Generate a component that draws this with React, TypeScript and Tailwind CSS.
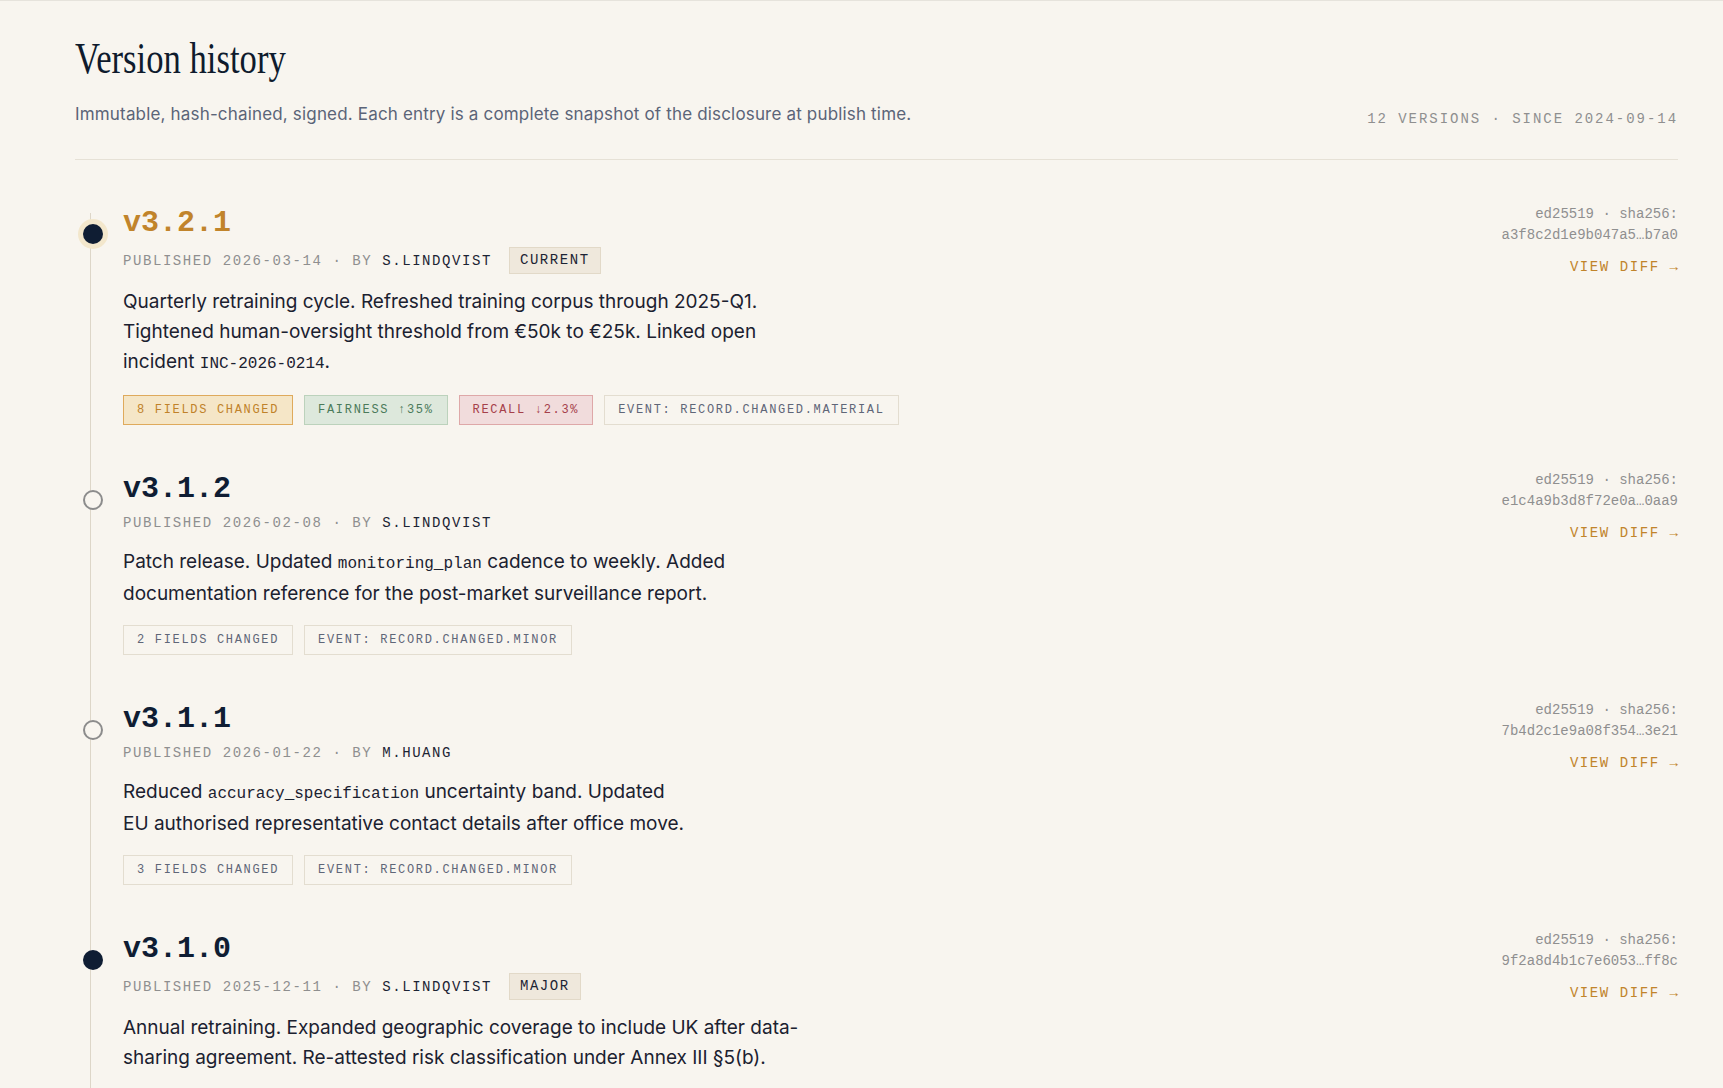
import type { ReactNode } from "react";

const MONO = "font-['Liberation_Mono',monospace]";
const SANS = "font-['Inter',sans-serif]";

type Tone = "gold" | "green" | "red" | "plain";

type Tag = { label: string; tone: Tone };

type Version = {
  version: string;
  date: string;
  by: string;
  badge?: string;
  dot: "current" | "open" | "filled";
  hash: string;
  lines: ReactNode[];
  tags: Tag[];
};

const tagTone: Record<Tone, string> = {
  gold: "border-[#dfaa5c] bg-[#f5e6c7] text-[#c0822a]",
  green: "border-[#bcd2bc] bg-[#dde8dc] text-[#4b7a5a]",
  red: "border-[#dea8a8] bg-[#f1dcdc] text-[#a5404a]",
  plain: "border-[#e3ddd0] bg-transparent text-[#5f6678]",
};

function Code({ children }: { children: ReactNode }) {
  return <code className={`${MONO} text-[16px] text-[#1b2130]`}>{children}</code>;
}

const versions: Version[] = [
  {
    version: "v3.2.1",
    date: "2026-03-14",
    by: "S.LINDQVIST",
    badge: "CURRENT",
    dot: "current",
    hash: "a3f8c2d1e9b047a5…b7a0",
    lines: [
      "Quarterly retraining cycle. Refreshed training corpus through 2025-Q1.",
      "Tightened human-oversight threshold from €50k to €25k. Linked open",
      <>
        incident <Code>INC-2026-0214</Code>.
      </>,
    ],
    tags: [
      { label: "8 FIELDS CHANGED", tone: "gold" },
      { label: "FAIRNESS ↑35%", tone: "green" },
      { label: "RECALL ↓2.3%", tone: "red" },
      { label: "EVENT: RECORD.CHANGED.MATERIAL", tone: "plain" },
    ],
  },
  {
    version: "v3.1.2",
    date: "2026-02-08",
    by: "S.LINDQVIST",
    dot: "open",
    hash: "e1c4a9b3d8f72e0a…0aa9",
    lines: [
      <>
        Patch release. Updated <Code>monitoring_plan</Code> cadence to weekly. Added
      </>,
      "documentation reference for the post-market surveillance report.",
    ],
    tags: [
      { label: "2 FIELDS CHANGED", tone: "plain" },
      { label: "EVENT: RECORD.CHANGED.MINOR", tone: "plain" },
    ],
  },
  {
    version: "v3.1.1",
    date: "2026-01-22",
    by: "M.HUANG",
    dot: "open",
    hash: "7b4d2c1e9a08f354…3e21",
    lines: [
      <>
        Reduced <Code>accuracy_specification</Code> uncertainty band. Updated
      </>,
      "EU authorised representative contact details after office move.",
    ],
    tags: [
      { label: "3 FIELDS CHANGED", tone: "plain" },
      { label: "EVENT: RECORD.CHANGED.MINOR", tone: "plain" },
    ],
  },
  {
    version: "v3.1.0",
    date: "2025-12-11",
    by: "S.LINDQVIST",
    badge: "MAJOR",
    dot: "filled",
    hash: "9f2a8d4b1c7e6053…ff8c",
    lines: [
      "Annual retraining. Expanded geographic coverage to include UK after data-",
      "sharing agreement. Re-attested risk classification under Annex III §5(b).",
    ],
    tags: [
      { label: "14 FIELDS CHANGED", tone: "gold" },
      { label: "EVENT: RECORD.CHANGED.MATERIAL", tone: "plain" },
    ],
  },
];

function Dot({ kind }: { kind: Version["dot"] }) {
  if (kind === "current") {
    return (
      <span className="absolute left-[8px] top-[19px] h-5 w-5 rounded-full bg-[#0f1d33] shadow-[0_0_0_5px_#f3e7cc]" />
    );
  }
  if (kind === "filled") {
    return <span className="absolute left-[8px] top-[19px] h-5 w-5 rounded-full bg-[#0f1d33]" />;
  }
  return (
    <span className="absolute left-[8px] top-[19px] h-5 w-5 rounded-full border-[2.5px] border-[#8c8c8c] bg-[#f8f5ef]" />
  );
}

function Entry({ v }: { v: Version }) {
  return (
    <div className="relative flex items-start justify-between pb-[46px] pl-[48px]">
      <Dot kind={v.dot} />
      <div>
        <div
          className={`${MONO} text-[30px] font-bold leading-[36px] ${
            v.dot === "current" ? "text-[#c1842b]" : "text-[#0f1d33]"
          }`}
        >
          {v.version}
        </div>
        <div className={`${MONO} mt-[6px] flex items-center text-[14px] leading-5 tracking-[0.112em] text-[#8f8f8f]`}>
          <span>
            PUBLISHED {v.date} · BY <span className="text-[#1c2434]">{v.by}</span>
          </span>
          {v.badge && (
            <span className="ml-[17px] border border-[#e2d9c8] bg-[#efe8dc] px-2.5 py-1 leading-[17px] text-[#1c2434]">
              {v.badge}
            </span>
          )}
        </div>
        <p
          className={`${SANS} ${
            v.badge ? "mt-[13px]" : "mt-[14px]"
          } whitespace-nowrap text-[19px] leading-[30px] text-[#1b2130]`}
        >
          {v.lines.map((line, i) => (
            <span key={i} className="block">
              {line}
            </span>
          ))}
        </p>
        <div className="mt-4 flex gap-[11px]">
          {v.tags.map((t) => (
            <span
              key={t.label}
              className={`${MONO} border px-[13px] py-[6px] text-[12px] leading-4 tracking-[0.14em] ${tagTone[t.tone]}`}
            >
              {t.label}
            </span>
          ))}
        </div>
      </div>
      <div className={`${MONO} -mt-px flex flex-col items-end`}>
        <div className="text-right text-[14px] leading-[21px] text-[#8f8f8f]">
          ed25519 · sha256:
          <br />
          {v.hash}
        </div>
        <a className="-mr-[0.112em] mt-[11px] cursor-pointer text-[14px] leading-5 tracking-[0.112em] text-[#c1842b]">
          VIEW DIFF →
        </a>
      </div>
    </div>
  );
}

export default function App() {
  return (
    <div className="min-h-screen border-t border-[#e6e3dc] bg-[#f8f5ef] pl-[75px] pr-[45px] pt-[35px]">
      <header className="flex items-end justify-between border-b border-[#e6e1d6] pb-[33px]">
        <div>
          <h1 className="origin-left scale-x-[0.77] font-['Liberation_Serif',serif] text-[45px] leading-[45px] text-[#0f1b2d]">
            Version history
          </h1>
          <p className={`${SANS} mt-[21px] text-[17px] leading-6 tracking-[0.01em] text-[#5b6478]`}>
            Immutable, hash-chained, signed. Each entry is a complete snapshot of the disclosure at publish time.
          </p>
        </div>
        <div className={`${MONO} -mb-[3px] text-[14px] leading-5 tracking-[0.14em] text-[#8f8f8f]`}>
          12 VERSIONS · SINCE 2024-09-14
        </div>
      </header>

      <div className="pt-[45px]">
        <div className="relative">
          <span className="absolute bottom-0 left-[15px] top-[8px] w-px bg-[#ddd6c8]" />
          {versions.map((v) => (
            <Entry key={v.version} v={v} />
          ))}
        </div>
      </div>
    </div>
  );
}
